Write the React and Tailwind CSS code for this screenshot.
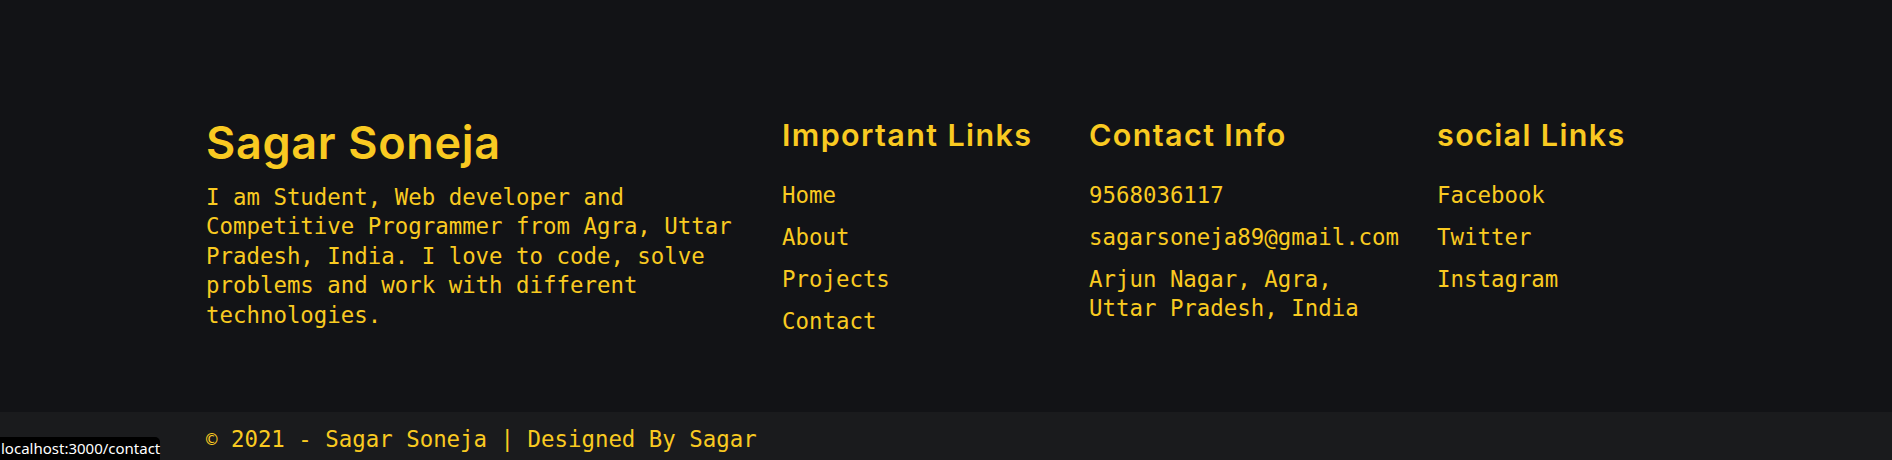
import React from 'react';

const mono = "font-['DejaVu_Sans_Mono','Liberation_Mono',monospace]";
const head = "font-['Inter','Noto_Sans',sans-serif]";

const importantLinks = ['Home', 'About', 'Projects', 'Contact'];
const socialLinks = ['Facebook', 'Twitter', 'Instagram'];

function LinkColumn({ title, items, width }) {
  return (
    <div className={width}>
      <h3 className={`${head} font-semibold text-[30.5px] leading-[36px] tracking-[0.045em] mb-[27.5px]`}>{title}</h3>
      <ul className={`${mono} text-[22.4px] leading-[29.5px] space-y-[12.7px]`}>
        {items.map(item => (
          <li key={item}>
            <a href="#" className="hover:underline">{item}</a>
          </li>
        ))}
      </ul>
    </div>
  );
}

export default function App() {
  return (
    <div className="relative h-[460px] overflow-hidden bg-[#121316] text-[#f9ca21]">
      {/* main footer */}
      <footer className="pt-[117px] pb-[75px] pl-[206px] flex">
        <div className="w-[576px]">
          <h2 className={`${head} font-semibold text-[45px] leading-[52.8px] tracking-[0.015em] mb-[13px]`}>Sagar Soneja</h2>
          <p className={`${mono} text-[22.4px] leading-[29.5px] max-w-[550px]`}>
            I am Student, Web developer and Competitive Programmer from Agra, Uttar Pradesh, India. I love to code, solve problems and work with different technologies.
          </p>
        </div>

        <LinkColumn title="Important Links" items={importantLinks} width="w-[307px]" />

        <div className="w-[348px]">
          <h3 className={`${head} font-semibold text-[30.5px] leading-[36px] tracking-[0.045em] mb-[27.5px]`}>Contact Info</h3>
          <ul className={`${mono} text-[22.4px] leading-[29.5px] space-y-[12.7px]`}>
            <li>9568036117</li>
            <li>sagarsoneja89@gmail.com</li>
            <li>
              Arjun Nagar, Agra,
              <br />
              Uttar Pradesh, India
            </li>
          </ul>
        </div>

        <LinkColumn title="social Links" items={socialLinks} width="flex-1" />
      </footer>

      {/* copyright bar */}
      <div className={`bg-[#1a1b1d] pl-[206px] pt-[13.5px] pb-[13px] ${mono} text-[22.4px] leading-[29.5px]`}>
        <span className="text-[19px] align-[1px]">©</span> 2021 - Sagar Soneja | Designed By Sagar
      </div>

      {/* browser status bubble */}
      <div className="absolute left-0 bottom-0 h-[23px] w-[160px] bg-black rounded-tr-[5px] pl-[1px] flex items-center font-['Noto_Sans','Open_Sans',sans-serif] text-[15px] leading-[23px] text-white">
        localhost:3000/contact
      </div>
    </div>
  );
}
